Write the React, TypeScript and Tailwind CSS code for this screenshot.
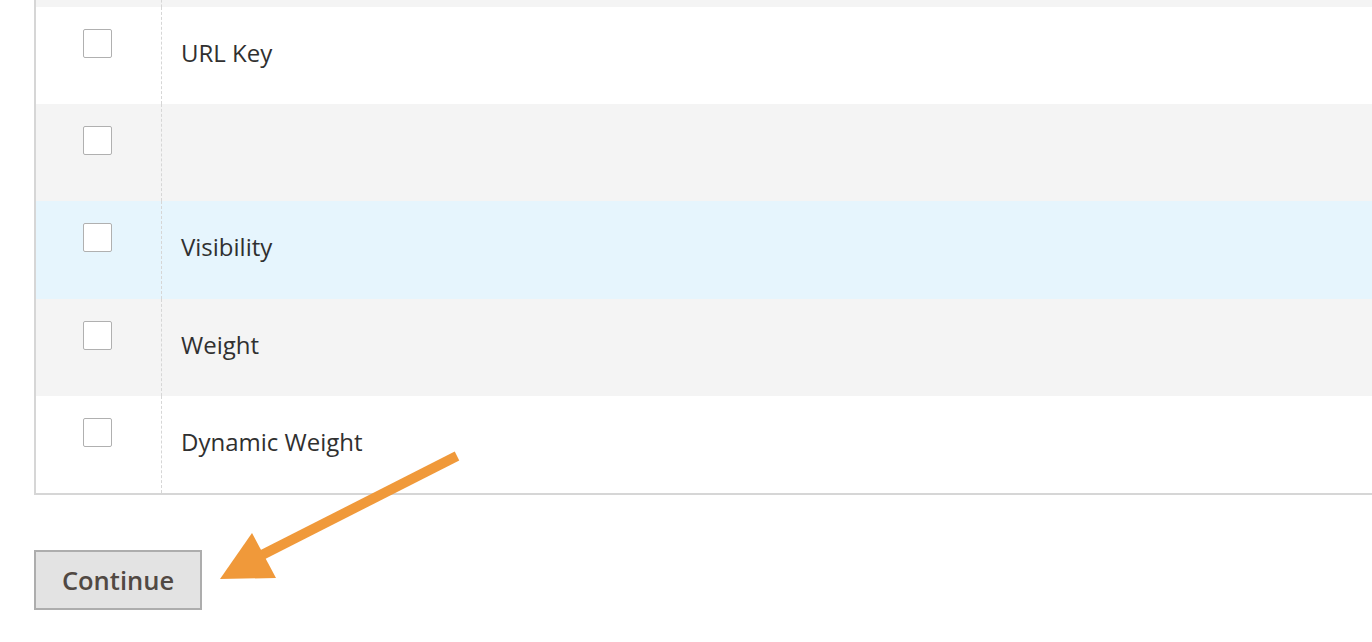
import React from "react";

const rows: { label: string; bg: string }[] = [
  { label: "URL Key", bg: "bg-white" },
  { label: "", bg: "bg-[#f4f4f4]" },
  { label: "Visibility", bg: "bg-[#e6f5fd]" },
  { label: "Weight", bg: "bg-[#f4f4f4]" },
  { label: "Dynamic Weight", bg: "bg-white" },
];

export default function App() {
  return (
    <div
      className="relative w-[1372px] h-[642px] bg-white overflow-hidden"
      style={{ fontFamily: '"Open Sans", "Liberation Sans", sans-serif' }}
    >
      <div className="ml-[34px] border-l-2 border-[#d6d6d6] border-b-2">
        <div className="flex h-[7px] bg-[#f4f4f4]">
          <div className="w-[125px]" />
          <div className="flex-1 border-l border-dashed border-[#d6d6d6]" />
        </div>
        {rows.map((r, i) => (
          <div key={i} className={`flex h-[97.2px] ${r.bg}`}>
            <div className="w-[125px] flex justify-start pl-[47px] pt-[22px]">
              <div className="w-[29px] h-[29px] border-[1.5px] border-[#b0b0b0] rounded-[2px] bg-white" />
            </div>
            <div className="flex-1 border-l border-dashed border-[#d6d6d6] pl-[19px] pt-[31px] text-[24px] leading-[30px] text-[#303030]">
              {r.label}
            </div>
          </div>
        ))}
      </div>
      <div className="ml-[34px] mt-[55px]">
        <button className="h-[60px] w-[168px] bg-[#e3e3e3] border-2 border-[#adadad] text-[25.5px] font-semibold text-[#514943]">
          Continue
        </button>
      </div>
      <svg className="absolute left-0 top-0 pointer-events-none" width="1372" height="642">
        <line x1="457" y1="456" x2="258" y2="557" stroke="#f0993a" strokeWidth="10" />
        <polygon points="252,533 220,579 276,578" fill="#f0993a" />
      </svg>
    </div>
  );
}
